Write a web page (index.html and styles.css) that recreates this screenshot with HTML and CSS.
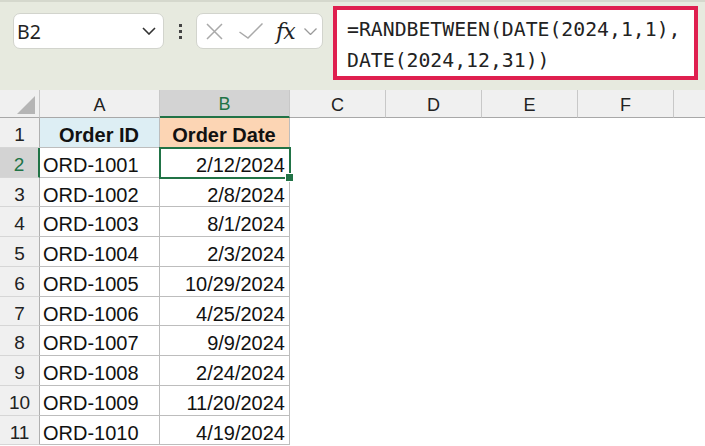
FILE: index.html
```html
<!DOCTYPE html>
<html>
<head>
<meta charset="utf-8">
<link rel="stylesheet" href="styles.css">
</head>
<body>
<div class="topbar">
  <div class="namebox">
    <span class="name">B2</span>
    <svg class="chev" width="14" height="8" viewBox="0 0 14 8"><path d="M1 1 L7 7 L13 1" fill="none" stroke="#333" stroke-width="1.6"/></svg>
  </div>
  <div class="dots"><i></i><i></i><i></i></div>
  <div class="fxbox">
    <svg class="ic-x" width="17" height="17" viewBox="0 0 17 17"><path d="M1 1 L16 16 M16 1 L1 16" stroke="#a9a9a9" stroke-width="1.5" fill="none"/></svg>
    <svg class="ic-check" width="24" height="16" viewBox="0 0 24 16"><path d="M0.5 9 L9 15 L23.5 0.5" stroke="#a9a9a9" stroke-width="1.5" fill="none"/></svg>
    <span class="fx">fx</span>
    <svg class="ic-chev" width="13" height="7" viewBox="0 0 13 7"><path d="M0.5 0.5 L6.5 6.5 L12.5 0.5" stroke="#9a9a9a" stroke-width="1.3" fill="none"/></svg>
  </div>
  <div class="formula">=RANDBETWEEN(DATE(2024,1,1),<br>DATE(2024,12,31))</div>
</div>
<div class="sheet">
  <div class="corner"><span class="tri"></span></div>
  <div class="colh">A</div>
  <div class="colh sel">B</div>
  <div class="colh">C</div>
  <div class="colh">D</div>
  <div class="colh">E</div>
  <div class="colh">F</div>
  <div class="colh last"></div>

  <div class="rowh">1</div><div class="cell hA">Order ID</div><div class="cell hB">Order Date</div><div class="blank"></div>
  <div class="rowh sel">2</div><div class="cell">ORD-1001</div><div class="cell num active">2/12/2024</div><div class="blank"></div>
  <div class="rowh">3</div><div class="cell">ORD-1002</div><div class="cell num">2/8/2024</div><div class="blank"></div>
  <div class="rowh">4</div><div class="cell">ORD-1003</div><div class="cell num">8/1/2024</div><div class="blank"></div>
  <div class="rowh">5</div><div class="cell">ORD-1004</div><div class="cell num">2/3/2024</div><div class="blank"></div>
  <div class="rowh">6</div><div class="cell">ORD-1005</div><div class="cell num">10/29/2024</div><div class="blank"></div>
  <div class="rowh">7</div><div class="cell">ORD-1006</div><div class="cell num">4/25/2024</div><div class="blank"></div>
  <div class="rowh">8</div><div class="cell">ORD-1007</div><div class="cell num">9/9/2024</div><div class="blank"></div>
  <div class="rowh">9</div><div class="cell">ORD-1008</div><div class="cell num">2/24/2024</div><div class="blank"></div>
  <div class="rowh">10</div><div class="cell">ORD-1009</div><div class="cell num">11/20/2024</div><div class="blank"></div>
  <div class="rowh">11</div><div class="cell">ORD-1010</div><div class="cell num">4/19/2024</div><div class="blank"></div>
</div>
</body>
</html>
```

FILE: styles.css
```css
html, body {
  margin: 0;
  padding: 0;
  background: #ffffff;
  overflow: hidden;
}
body {
  width: 705px;
  height: 446px;
}
.topbar {
  box-sizing: border-box;
  height: 90px;
  background: #e7eadf;
  border-top: 2px solid #d5d8cd;
  padding: 4px 0 0 13px;
  display: flex;
  align-items: flex-start;
}
.namebox {
  box-sizing: border-box;
  margin-top: 7px;
  width: 151px;
  height: 36px;
  background: #fff;
  border: 1px solid #d2d4cd;
  border-radius: 7px;
  display: flex;
  align-items: center;
  justify-content: space-between;
  padding: 0 7px 0 3px;
}
.name {
  font-family: "Noto Sans", "Open Sans", sans-serif;
  font-size: 19.5px;
  color: #222;
}
.dots {
  margin: 18px 0 0 15px;
  width: 3px;
  display: flex;
  flex-direction: column;
  gap: 3px;
}
.dots i {
  display: block;
  width: 3px;
  height: 3px;
  background: #444;
}
.fxbox {
  box-sizing: border-box;
  margin: 7px 0 0 14px;
  width: 127px;
  height: 36px;
  background: #fff;
  border: 1px solid #d2d4cd;
  border-radius: 7px;
  display: flex;
  align-items: center;
  padding-left: 9px;
}
.ic-x { margin-top: 1px; }
.ic-check { margin-left: 16px; }
.fx {
  margin-left: 13px;
  font-family: "DejaVu Serif", "Liberation Serif", serif;
  font-style: italic;
  font-size: 22px;
  color: #222;
  letter-spacing: -1px;
  line-height: 1;
  margin-top: 2px;
}
.ic-chev { margin-left: 9px; }
.formula {
  box-sizing: border-box;
  margin-left: 10px;
  width: 365px;
  height: 74px;
  background: #fff;
  border: 4px solid #df1f4f;
  padding: 4px 0 0 10px;
  font-family: "DejaVu Sans Mono", monospace;
  font-size: 19.8px;
  line-height: 31px;
  color: #222;
  white-space: nowrap;
}
.sheet {
  display: grid;
  grid-template-columns: 40px 120px 130px 96px 96px 96px 96px 31px;
  grid-template-rows: 28px repeat(11, 29.75px);
  font-family: "Liberation Sans", Arial, sans-serif;
}
.corner {
  position: relative;
  background: #f0f0f0;
  border-right: 1px solid #c8c8c8;
  border-bottom: 1px solid #a8a8a8;
}
.tri {
  position: absolute;
  right: 4px;
  bottom: 3px;
  width: 0;
  height: 0;
  border-left: 18px solid transparent;
  border-bottom: 18px solid #b5b5b5;
}
.colh {
  box-sizing: border-box;
  background: #f0f0f0;
  border-right: 1px solid #c8c8c8;
  border-bottom: 1px solid #a8a8a8;
  text-align: center;
  font-size: 18px;
  line-height: 30px;
  color: #222;
}
.colh.sel {
  background: #d3d3d3;
  color: #217346;
  border-bottom: 2px solid #217346;
  line-height: 29px;
}
.colh.last { border-right: none; }
.rowh {
  box-sizing: border-box;
  background: #f0f0f0;
  border-right: 1px solid #b0b0b0;
  border-bottom: 1px solid #d6d6d6;
  text-align: center;
  font-size: 19px;
  line-height: 26px;
  padding-top: 4px;
  color: #222;
}
.rowh.sel {
  background: #d3d3d3;
  color: #217346;
  border-right: 2px solid #217346;
}
.cell {
  box-sizing: border-box;
  position: relative;
  border-right: 1px solid #bdbdbd;
  border-bottom: 1px solid #bdbdbd;
  font-size: 20px;
  line-height: 26px;
  padding: 4px 4px 0 3px;
  color: #111;
  white-space: nowrap;
}
.cell.num { text-align: right; }
.cell.hA {
  background: #ddeef4;
  font-weight: bold;
  text-align: center;
}
.cell.hB {
  background: #fcd5b4;
  font-weight: bold;
  text-align: center;
}
.cell.active {
  outline: 2px solid #217346;
  outline-offset: -1px;
  z-index: 1;
}
.cell.active::after {
  content: "";
  position: absolute;
  right: -5px;
  bottom: -5px;
  width: 7px;
  height: 7px;
  background: #217346;
  border: 1px solid #fff;
}
.blank {
  grid-column: span 5;
}
```
